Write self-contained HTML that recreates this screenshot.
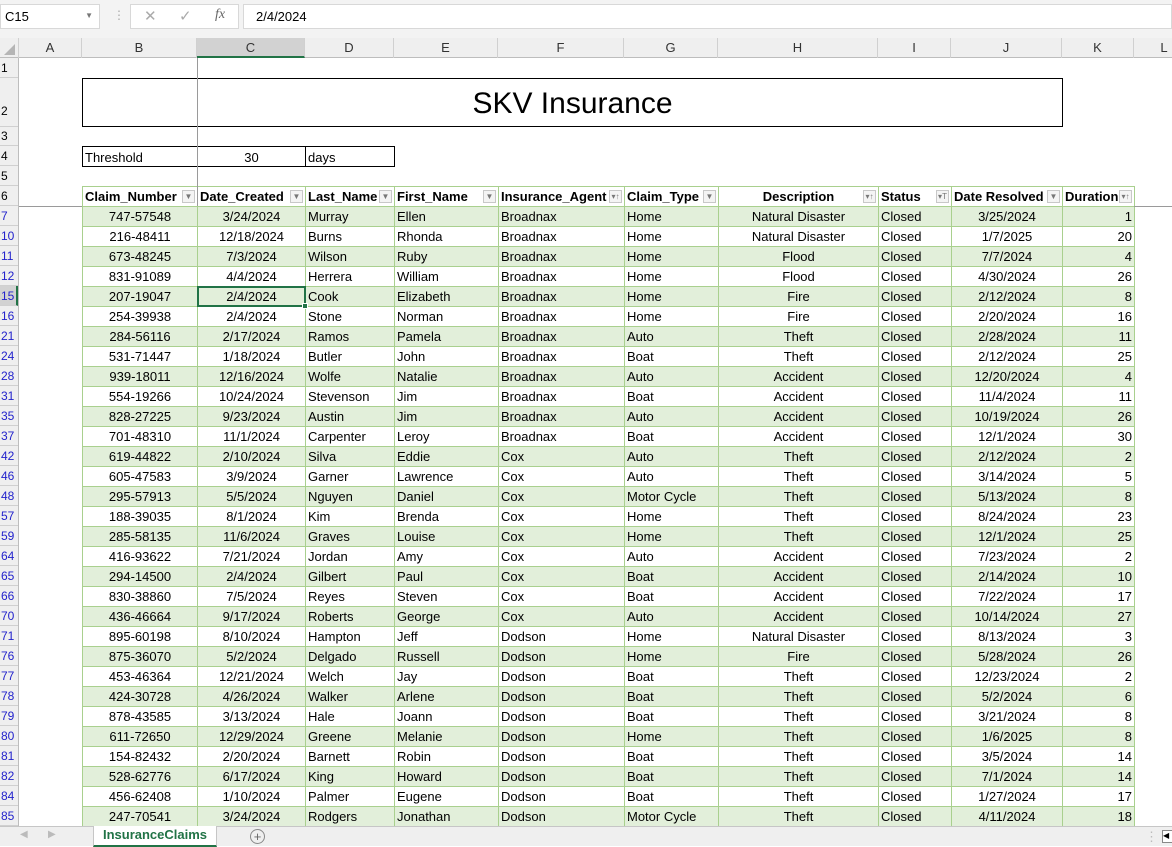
<!DOCTYPE html>
<html><head><meta charset="utf-8"><style>
*{box-sizing:border-box;margin:0;padding:0}
body{width:1172px;height:846px;overflow:hidden;background:#fff;font-family:"Liberation Sans",sans-serif;font-size:13px;color:#000;position:relative}
.abs{position:absolute}
#fbar{left:0;top:0;width:1172px;height:38px;background:#f3f3f3}
.box{background:#fff;border:1px solid #d8d8d8}
#colh{left:0;top:38px;width:1172px;height:20px;background:#efefef;border-bottom:1px solid #bdbdbd}
.ch{position:absolute;top:0;height:20px;line-height:20px;text-align:center;color:#333;border-right:1px solid #d0d0d0;font-size:13px}
#rowh{left:0;top:58px;width:19px;height:768px;background:#efefef;border-right:1px solid #bdbdbd}
.rh{position:absolute;left:0;width:18px;text-align:left;padding-left:1px;font-size:12px;border-bottom:1px solid #d0d0d0}
table{position:absolute;left:82px;top:186px;border-collapse:collapse;table-layout:fixed}
td{height:20px;border:1px solid #a9d08e;padding:1px 2px 0 2px;white-space:nowrap;overflow:hidden;line-height:18px}
tr.g td{background:#e2efda}
tr.h td{font-weight:bold;background:#fff;position:relative}
.c{text-align:center}.r{text-align:right}
.fb{position:absolute;right:2px;top:3px;width:13px;height:13px;border:1px solid #c8c8c8;background:#f4f4f4;font-size:8px;color:#777;text-align:center;line-height:12px;font-weight:normal}
</style></head><body>
<div id="fbar" class="abs">
 <div class="abs box" style="left:0;top:4px;width:100px;height:25px;padding:4px 4px;font-size:13px">C15<span style="position:absolute;right:6px;top:6px;font-size:8px;color:#777">▼</span></div>
 <div class="abs" style="left:113px;top:8px;color:#aaa;font-size:12px">⋮</div>
 <div class="abs box" style="left:130px;top:4px;width:109px;height:25px;color:#aaa;font-size:15px"><span class="abs" style="left:13px;top:2px">✕</span><span class="abs" style="left:48px;top:2px">✓</span><span class="abs" style="left:84px;top:2px;font-style:italic;font-family:'Liberation Serif',serif;color:#666;font-size:14px">fx</span></div>
 <div class="abs box" style="left:243px;top:4px;width:929px;height:25px;padding:4px 12px;font-size:13px">2/4/2024</div>
</div>
<div id="colh" class="abs">
 <div class="abs" style="left:0;top:0;width:19px;height:20px;border-right:1px solid #d0d0d0"><div style="position:absolute;right:3px;bottom:3px;width:0;height:0;border-left:11px solid transparent;border-bottom:11px solid #b5b5b5"></div></div>
 <div class="ch" style="left:19px;width:63px">A</div>
 <div class="ch" style="left:82px;width:115px">B</div>
 <div class="ch" style="left:197px;width:108px;background:#d2d2d2;border-bottom:2px solid #217346">C</div>
 <div class="ch" style="left:305px;width:89px">D</div>
 <div class="ch" style="left:394px;width:104px">E</div>
 <div class="ch" style="left:498px;width:126px">F</div>
 <div class="ch" style="left:624px;width:94px">G</div>
 <div class="ch" style="left:718px;width:160px">H</div>
 <div class="ch" style="left:878px;width:73px">I</div>
 <div class="ch" style="left:951px;width:111px">J</div>
 <div class="ch" style="left:1062px;width:72px">K</div>
 <div class="ch" style="left:1134px;width:60px;border:none">L</div>
</div>
<div id="rowh" class="abs">
 <div class="rh" style="top:0;height:20px;line-height:20px">1</div>
 <div class="rh" style="top:20px;height:49px;line-height:66px">2</div>
 <div class="rh" style="top:69px;height:19px;line-height:19px">3</div>
 <div class="rh" style="top:88px;height:20px;line-height:20px">4</div>
 <div class="rh" style="top:108px;height:20px;line-height:20px">5</div>
 <div class="rh" style="top:128px;height:20px;line-height:20px">6</div>
 <div id="rn"></div>
</div>
<div class="abs" style="left:82px;top:78px;width:981px;height:49px;border:1px solid #000;text-align:center;font-size:30px;line-height:49px">SKV Insurance</div>
<div class="abs" style="left:82px;top:146px;width:313px;height:21px;border:1px solid #000"></div>
<div class="abs" style="left:197px;top:146px;width:1px;height:21px;background:#000"></div>
<div class="abs" style="left:305px;top:146px;width:1px;height:21px;background:#000"></div>
<div class="abs" style="left:85px;top:149px;line-height:18px">Threshold</div>
<div class="abs" style="left:198px;top:149px;width:107px;text-align:center;line-height:18px">30</div>
<div class="abs" style="left:308px;top:149px;line-height:18px">days</div>
<table>
<colgroup><col style="width:115px"><col style="width:108px"><col style="width:89px"><col style="width:104px"><col style="width:126px"><col style="width:94px"><col style="width:160px"><col style="width:73px"><col style="width:111px"><col style="width:72px"></colgroup>
<tr class="h"><td>Claim_Number<span class="fb">▼</span></td><td>Date_Created<span class="fb">▼</span></td><td>Last_Name<span class="fb">▼</span></td><td>First_Name<span class="fb">▼</span></td><td>Insurance_Agent<span class="fb">▾↑</span></td><td>Claim_Type<span class="fb">▼</span></td><td class="c">Description<span class="fb">▾↑</span></td><td>Status<span class="fb">▾T</span></td><td>Date Resolved<span class="fb">▼</span></td><td>Duration<span class="fb">▾↑</span></td></tr>
<tbody id="tb"></tbody>
</table>
<div class="abs" style="left:197px;top:58px;width:1px;height:148px;background:#9a9a9a"></div>
<div class="abs" style="left:19px;top:206px;width:63px;height:1px;background:#9a9a9a"></div>
<div class="abs" style="left:1134px;top:206px;width:38px;height:1px;background:#9a9a9a"></div>
<div class="abs" style="left:197px;top:286px;width:109px;height:21px;border:2px solid #217346"></div>
<div class="abs" style="left:302px;top:303px;width:6px;height:6px;background:#217346;border:1px solid #fff"></div>
<div class="abs" style="left:0;top:826px;width:1172px;height:20px;background:#efefef;border-top:1px solid #c6c6c6">
 <span class="abs" style="left:20px;top:2px;color:#bbb;font-size:10px">◀</span><span class="abs" style="left:48px;top:2px;color:#bbb;font-size:10px">▶</span>
 <div class="abs" style="left:93px;top:-1px;width:124px;height:21px;background:#fff;border:1px solid #c6c6c6;border-top:none;text-align:center;font-weight:bold;color:#217346;font-size:13px;line-height:18px;border-bottom:2px solid #217346">InsuranceClaims</div>
 <div class="abs" style="left:250px;top:2px;width:15px;height:15px;border:1px solid #888;border-radius:50%;text-align:center;line-height:13px;color:#666;font-size:13px">+</div>
 <span class="abs" style="left:1145px;top:2px;color:#bbb">⋮</span>
 <div class="abs" style="left:1162px;top:3px;width:12px;height:13px;border:1px solid #888;background:#fff;font-size:8px">◀</div>
</div>
<script>
var d=`7|747-57548|3/24/2024|Murray|Ellen|Broadnax|Home|Natural Disaster|3/25/2024|1
10|216-48411|12/18/2024|Burns|Rhonda|Broadnax|Home|Natural Disaster|1/7/2025|20
11|673-48245|7/3/2024|Wilson|Ruby|Broadnax|Home|Flood|7/7/2024|4
12|831-91089|4/4/2024|Herrera|William|Broadnax|Home|Flood|4/30/2024|26
15|207-19047|2/4/2024|Cook|Elizabeth|Broadnax|Home|Fire|2/12/2024|8
16|254-39938|2/4/2024|Stone|Norman|Broadnax|Home|Fire|2/20/2024|16
21|284-56116|2/17/2024|Ramos|Pamela|Broadnax|Auto|Theft|2/28/2024|11
24|531-71447|1/18/2024|Butler|John|Broadnax|Boat|Theft|2/12/2024|25
28|939-18011|12/16/2024|Wolfe|Natalie|Broadnax|Auto|Accident|12/20/2024|4
31|554-19266|10/24/2024|Stevenson|Jim|Broadnax|Boat|Accident|11/4/2024|11
35|828-27225|9/23/2024|Austin|Jim|Broadnax|Auto|Accident|10/19/2024|26
37|701-48310|11/1/2024|Carpenter|Leroy|Broadnax|Boat|Accident|12/1/2024|30
42|619-44822|2/10/2024|Silva|Eddie|Cox|Auto|Theft|2/12/2024|2
46|605-47583|3/9/2024|Garner|Lawrence|Cox|Auto|Theft|3/14/2024|5
48|295-57913|5/5/2024|Nguyen|Daniel|Cox|Motor Cycle|Theft|5/13/2024|8
57|188-39035|8/1/2024|Kim|Brenda|Cox|Home|Theft|8/24/2024|23
59|285-58135|11/6/2024|Graves|Louise|Cox|Home|Theft|12/1/2024|25
64|416-93622|7/21/2024|Jordan|Amy|Cox|Auto|Accident|7/23/2024|2
65|294-14500|2/4/2024|Gilbert|Paul|Cox|Boat|Accident|2/14/2024|10
66|830-38860|7/5/2024|Reyes|Steven|Cox|Boat|Accident|7/22/2024|17
70|436-46664|9/17/2024|Roberts|George|Cox|Auto|Accident|10/14/2024|27
71|895-60198|8/10/2024|Hampton|Jeff|Dodson|Home|Natural Disaster|8/13/2024|3
76|875-36070|5/2/2024|Delgado|Russell|Dodson|Home|Fire|5/28/2024|26
77|453-46364|12/21/2024|Welch|Jay|Dodson|Boat|Theft|12/23/2024|2
78|424-30728|4/26/2024|Walker|Arlene|Dodson|Boat|Theft|5/2/2024|6
79|878-43585|3/13/2024|Hale|Joann|Dodson|Boat|Theft|3/21/2024|8
80|611-72650|12/29/2024|Greene|Melanie|Dodson|Home|Theft|1/6/2025|8
81|154-82432|2/20/2024|Barnett|Robin|Dodson|Boat|Theft|3/5/2024|14
82|528-62776|6/17/2024|King|Howard|Dodson|Boat|Theft|7/1/2024|14
84|456-62408|1/10/2024|Palmer|Eugene|Dodson|Boat|Theft|1/27/2024|17
85|247-70541|3/24/2024|Rodgers|Jonathan|Dodson|Motor Cycle|Theft|4/11/2024|18`.split("\n");
var tb="",rn="";
d.forEach(function(l,i){var f=l.split("|");
tb+='<tr'+(i%2==0?' class="g"':'')+'><td class="c">'+f[1]+'</td><td class="c">'+f[2]+'</td><td>'+f[3]+'</td><td>'+f[4]+'</td><td>'+f[5]+'</td><td>'+f[6]+'</td><td class="c">'+f[7]+'</td><td>Closed</td><td class="c">'+f[8]+'</td><td class="r">'+f[9]+'</td></tr>';
var sel=f[0]=="15";
rn+='<div class="rh" style="top:'+(148+i*20)+'px;height:20px;line-height:20px;color:#2222cc;'+(sel?'background:#d2d2d2;border-right:2px solid #217346;':'')+'">'+f[0]+'</div>';});
document.getElementById("tb").innerHTML=tb;
document.getElementById("rn").outerHTML=rn;
</script>
</body></html>
